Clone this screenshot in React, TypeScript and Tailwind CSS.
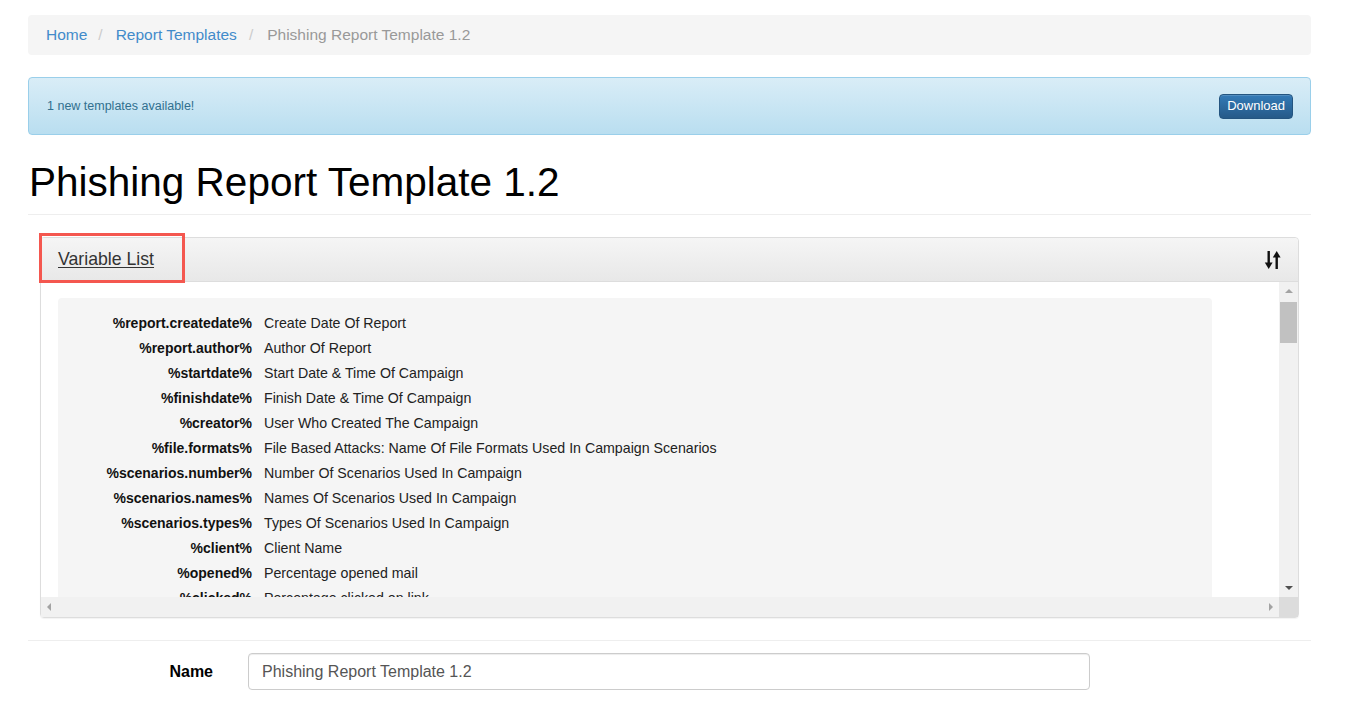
import React from 'react';

type Variable = {
  key: string;
  label: string;
};

const variables: Variable[] = [
  { key: '%report.createdate%', label: 'Create Date Of Report' },
  { key: '%report.author%', label: 'Author Of Report' },
  { key: '%startdate%', label: 'Start Date & Time Of Campaign' },
  { key: '%finishdate%', label: 'Finish Date & Time Of Campaign' },
  { key: '%creator%', label: 'User Who Created The Campaign' },
  {
    key: '%file.formats%',
    label: 'File Based Attacks: Name Of File Formats Used In Campaign Scenarios',
  },
  { key: '%scenarios.number%', label: 'Number Of Scenarios Used In Campaign' },
  { key: '%scenarios.names%', label: 'Names Of Scenarios Used In Campaign' },
  { key: '%scenarios.types%', label: 'Types Of Scenarios Used In Campaign' },
  { key: '%client%', label: 'Client Name' },
  { key: '%opened%', label: 'Percentage opened mail' },
  { key: '%clicked%', label: 'Percentage clicked on link' },
  { key: '%submitted%', label: 'Percentage submitted data' },
];

function SortIcon() {
  return (
    <svg width="18" height="20" viewBox="0 0 18 20" aria-hidden="true">
      <rect x="3.5" y="1" width="2.4" height="13" fill="#111" />
      <path d="M0.8 12.5 L4.7 19 L8.6 12.5 Z" fill="#111" />
      <rect x="11.5" y="6" width="2.4" height="13" fill="#111" />
      <path d="M8.8 7.5 L12.7 1 L16.6 7.5 Z" fill="#111" />
    </svg>
  );
}

function Breadcrumb() {
  return (
    <nav className="h-[40px] bg-[#f5f5f5] rounded-[4px] flex items-center px-[18px] text-[15.5px]">
      <span className="text-[#428bca]">Home</span>
      <span className="text-[#ccc] pl-[11px] pr-[13px]">/</span>
      <span className="text-[#428bca]">Report Templates</span>
      <span className="text-[#ccc] pl-[12px] pr-[14px]">/</span>
      <span className="text-[#999]">Phishing Report Template 1.2</span>
    </nav>
  );
}

function Alert() {
  return (
    <div className="mt-[22px] h-[58px] border border-[#9acfea] rounded-[4px] bg-gradient-to-b from-[#d9edf7] to-[#b9def0] flex items-center justify-between pl-[18px] pr-[17px]">
      <span className="text-[12.5px] text-[#31708f]">1 new templates available!</span>
      <button className="h-[25px] px-[7px] rounded-[4px] border border-[#245580] bg-gradient-to-b from-[#337ab7] to-[#265a88] text-white text-[13px] shadow-[inset_0_1px_0_rgba(255,255,255,0.15)]">
        Download
      </button>
    </div>
  );
}

function VariablePanel() {
  return (
    <div className="relative mt-[22px] mx-[12px] border border-[#ddd] rounded-[4px] shadow-[0_1px_1px_rgba(0,0,0,0.05)]">
      <div className="h-[44px] border-b border-[#ddd] rounded-t-[4px] bg-gradient-to-b from-[#f5f5f5] to-[#e8e8e8] flex items-center justify-between pl-[17px] pr-[16px]">
        <span className="text-[17.7px] text-[#333] underline underline-offset-[2px]">Variable List</span>
        <SortIcon />
      </div>

      <div className="flex flex-col">
        <div className="flex h-[315px]">
          <div className="flex-1 overflow-hidden pl-[17px] pt-[16px]">
            <div className="w-[1154px] bg-[#f5f5f5] rounded-[4px] pt-[13px] pb-[12px]">
              {variables.map((v) => (
                <div key={v.key} className="flex h-[25px] items-center text-[14px]">
                  <span className="w-[194px] text-right font-bold text-[#111]">{v.key}</span>
                  <span className="pl-[12px] text-[14.2px] text-[#222]">{v.label}</span>
                </div>
              ))}
            </div>
          </div>
          <div className="w-[19px] bg-[#f1f1f1] flex flex-col items-center">
            <div className="h-[18px] flex items-center justify-center">
              <div className="w-0 h-0 border-l-[4px] border-r-[4px] border-b-[4px] border-l-transparent border-r-transparent border-b-[#a3a3a3]" />
            </div>
            <div className="w-[17px] h-[41px] bg-[#c1c1c1] mt-[2px]" />
            <div className="flex-1" />
            <div className="h-[18px] flex items-center justify-center">
              <div className="w-0 h-0 border-l-[4px] border-r-[4px] border-t-[4px] border-l-transparent border-r-transparent border-t-[#505050]" />
            </div>
          </div>
        </div>
        <div className="flex h-[20px]">
          <div className="flex-1 bg-[#f1f1f1] flex items-center justify-between px-[6px]">
            <div className="w-0 h-0 border-t-[4px] border-b-[4px] border-r-[4px] border-t-transparent border-b-transparent border-r-[#a3a3a3]" />
            <div className="w-0 h-0 border-t-[4px] border-b-[4px] border-l-[4px] border-t-transparent border-b-transparent border-l-[#a3a3a3]" />
          </div>
          <div className="w-[19px] bg-[#dcdcdc]" />
        </div>
      </div>

      <div className="absolute left-[-2px] top-[-5px] w-[146px] h-[50px] border-[3px] border-[#f4574f] pointer-events-none" />
    </div>
  );
}

export default function App() {
  return (
    <div className="min-h-screen bg-white font-['Liberation_Sans',Arial,sans-serif] text-[#333]">
      <div className="ml-[28px] w-[1283px] pt-[15px]">
        <Breadcrumb />
        <Alert />
        <h1 className="mt-[25px] pb-[10px] border-b border-[#eee] text-[40.5px] leading-[44px] text-black pl-[1px]">
          Phishing Report Template 1.2
        </h1>
        <VariablePanel />
        <div className="mt-[22px] border-t border-[#eee] pt-[12px] flex items-center">
          <label className="w-[185px] text-right font-bold text-[16px] text-black">Name</label>
          <div className="ml-[35px] w-[842px] h-[37px] border border-[#ccc] rounded-[4px] flex items-center px-[13px] text-[16px] text-[#555] shadow-[inset_0_1px_1px_rgba(0,0,0,0.075)]">
            Phishing Report Template 1.2
          </div>
        </div>
      </div>
    </div>
  );
}
